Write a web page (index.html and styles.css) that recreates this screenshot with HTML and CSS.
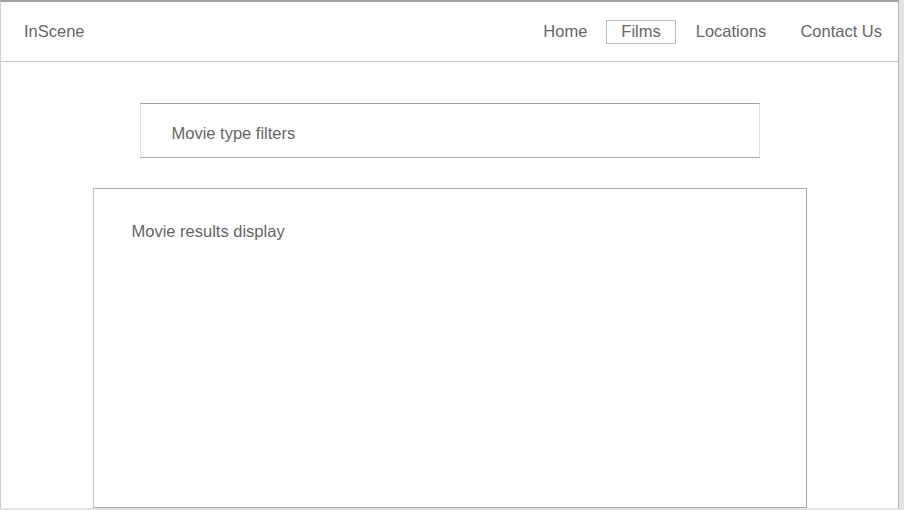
FILE: index.html
```html
<!DOCTYPE html>
<html>
<head>
<meta charset="utf-8">
<title>InScene</title>
<link rel="stylesheet" href="styles.css">
</head>
<body>
<div class="frame">
  <header class="header">
    <div class="brand">InScene</div>
    <nav class="nav">
      <a class="nav-item">Home</a>
      <a class="nav-item active">Films</a>
      <a class="nav-item">Locations</a>
      <a class="nav-item">Contact Us</a>
    </nav>
  </header>
  <main class="main">
    <section class="filters">Movie type filters</section>
    <section class="results">Movie results display</section>
  </main>
</div>
</body>
</html>
```
FILE: styles.css
```css
html, body {
  margin: 0;
  padding: 0;
}
body {
  background: #e4e4e4;
  font-family: "Liberation Sans", Arial, Helvetica, sans-serif;
  font-size: 16.5px;
  line-height: 20px;
  color: #666;
  width: 904px;
  height: 510px;
  overflow: hidden;
}
.frame {
  box-sizing: border-box;
  width: 899px;
  height: 508px;
  background: #fff;
  border-top: 2px solid #a0a0a0;
  border-left: 1px solid #d0d0d0;
  border-right: 1px solid #b8b8b8;
  display: flex;
  flex-direction: column;
  overflow: hidden;
}
.header {
  height: 60px;
  flex: 0 0 auto;
  box-sizing: border-box;
  border-bottom: 1px solid #c8c8c8;
  display: flex;
  align-items: center;
  justify-content: space-between;
  padding: 0 0 0 23px;
}
.brand {
  color: #666;
  margin-bottom: 2px;
}
.nav {
  display: flex;
  align-items: center;
  gap: 3px;
  margin-left: auto;
}
.nav-item {
  display: block;
  padding: 0 16px 2px;
  color: #666;
  text-decoration: none;
  box-sizing: border-box;
  height: 24px;
  line-height: 20px;
  border: 1px solid transparent;
}
.nav-item:first-child {
  padding-left: 15px;
  padding-right: 15px;
}
.nav-item.active {
  border-color: #bdbdbd;
  padding-left: 14px;
  padding-right: 14px;
}
.nav-item:last-child {
  padding-left: 13px;
  padding-right: 15px;
}
.main {
  flex: 1 1 auto;
  display: flex;
  flex-direction: column;
  align-items: center;
  padding-top: 41px;
  gap: 30px;
}
.filters {
  box-sizing: border-box;
  width: 620px;
  height: 55px;
  padding: 19px 31px 0;
  border-top: 1px solid #a0a0a0;
  border-bottom: 1px solid #a8a8a8;
  border-left: 1px solid #e2e2e2;
  border-right: 1px solid #e0e0e0;
}
.results {
  box-sizing: border-box;
  width: 714px;
  flex: 1 1 auto;
  padding: 32px 38px 0;
  border: 1px solid #aaa;
  border-left-color: #c4c4c4;
}
```
